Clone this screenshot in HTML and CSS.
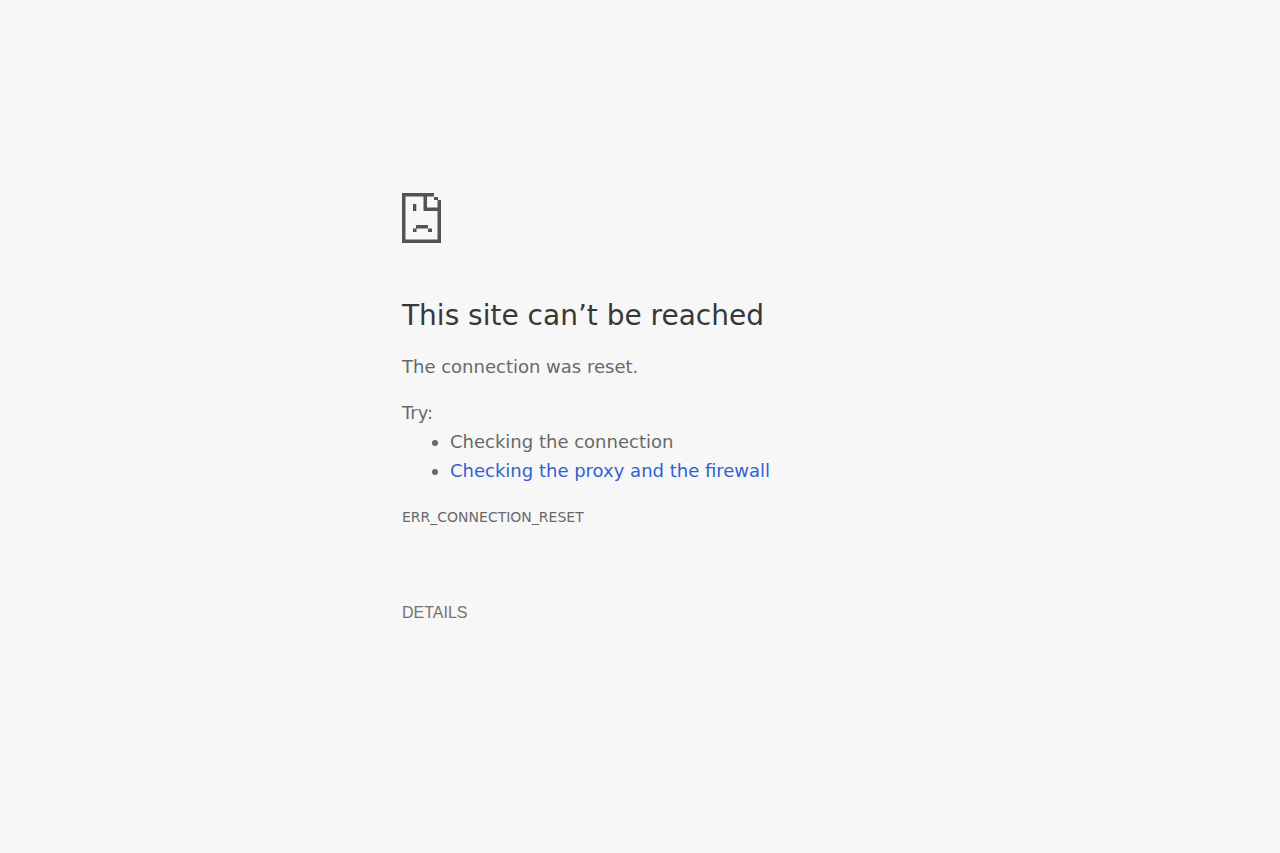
FILE: index.html
```html
<!DOCTYPE html>
<html lang="en">
<head>
<meta charset="utf-8">
<meta name="viewport" content="width=device-width, initial-scale=1">
<title>This site can’t be reached</title>
<link rel="stylesheet" href="styles.css">
</head>
<body>
<main class="error">
  <svg class="error-icon" viewBox="0 0 39 50" aria-hidden="true">
    <path fill="#535353" fill-rule="evenodd" d="M0 0H32V4H36V7H39V50H0ZM3.5 3.5V46.5H35.5V18H21.5V3.5ZM25 3.5V14.5H35.5V7H32V3.5ZM11 11H14.3V18H11ZM14 32H26V35.6H14ZM11 35.6H14.5V39H11ZM26 35.6H30V39H26Z"/>
  </svg>
  <h1 class="error-title">This site can’t be reached</h1>
  <p class="error-text">The connection was reset.</p>
  <p class="error-try">Try:</p>
  <ul class="error-list">
    <li>Checking the connection</li>
    <li><a class="error-link" href="#buttons">Checking the proxy and the firewall</a></li>
  </ul>
  <p class="error-code">ERR_CONNECTION_RESET</p>
  <div class="error-actions" id="buttons">
    <button class="details-button" type="button">DETAILS</button>
  </div>
</main>
</body>
</html>
```

FILE: styles.css
```css
body {
  margin: 0;
  background: #f7f7f7;
  color: #696969;
  font-family: "DejaVu Sans", sans-serif;
  font-size: 18px;
  line-height: 28px;
}

.error {
  box-sizing: border-box;
  max-width: 600px;
  margin: 0 auto;
  padding: 193px 62px 40px;
}

.error-icon {
  display: block;
  width: 39px;
  height: 50px;
}

.error-title {
  margin: 55px 0 19px;
  color: #383838;
  font-size: 28px;
  font-weight: 400;
  line-height: 36px;
}

.error-text,
.error-list {
  margin: 0 0 18px;
}

.error-try {
  margin: 0;
}

.error-list {
  padding-left: 48px;
  line-height: 29px;
}

.error-link {
  color: #2f62d0;
  text-decoration: none;
}

.error-code {
  margin: 0;
  font-size: 14px;
}

.error-actions {
  margin-top: 67px;
}

.details-button {
  padding: 0;
  border: 0;
  background: none;
  color: #737373;
  font-family: "Liberation Sans", sans-serif;
  font-size: 16px;
  line-height: 28px;
  cursor: pointer;
}
```
